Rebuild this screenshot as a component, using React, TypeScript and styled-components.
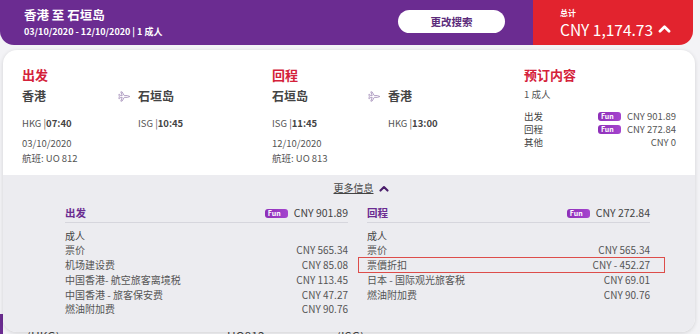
import React from "react";
import styled, { createGlobalStyle } from "styled-components";

const GlobalStyle = createGlobalStyle`
  html, body {
    margin: 0;
    padding: 0;
    width: 700px;
    height: 334px;
    overflow: hidden;
    background: #f3f3f6;
    font-family: "Noto Sans CJK SC", "Noto Sans", sans-serif;
  }
  * { box-sizing: border-box; }
`;

const Page = styled.div`
  width: 700px;
`;

const Header = styled.header`
  display: flex;
  width: 693px;
  height: 45px;
`;

const HeaderMain = styled.div`
  flex: 1;
  background: #6b2c91;
  border-bottom-left-radius: 14px;
  display: flex;
  align-items: center;
  justify-content: space-between;
  padding: 0 28px 0 24px;
`;

const TripTitle = styled.div`
  color: #fff;
  font-size: 12.5px;
  font-weight: 600;
  line-height: 17px;
  margin-top: -2px;
`;

const TripSub = styled.div`
  color: #fff;
  font-size: 9px;
  font-weight: 600;
  line-height: 13px;
  margin-top: 2px;
`;

const ChangeButton = styled.button`
  width: 107px;
  height: 23px;
  border: none;
  border-radius: 12px;
  background: #fff;
  color: #5b2b7a;
  font-family: inherit;
  font-size: 10.5px;
  font-weight: 600;
  margin-top: -3px;
`;

const TotalBox = styled.div`
  width: 160px;
  background: #e2232e;
  border-bottom-right-radius: 14px;
  padding-left: 27px;
  display: flex;
  flex-direction: column;
  justify-content: center;
  color: #fff;
`;

const TotalLabel = styled.div`
  font-size: 8px;
  font-weight: 600;
  line-height: 10px;
  margin-bottom: 2px;
`;

const TotalValue = styled.div`
  display: flex;
  align-items: center;
  gap: 5px;
  font-size: 15.5px;
  line-height: 18px;
`;

const Card = styled.section`
  position: relative;
  z-index: 1;
  width: 692px;
  margin: 5px 0 0 3px;
  border-radius: 14px;
  overflow: hidden;
  background: #fff;
  box-shadow: 0 1px 4px rgba(0, 0, 0, 0.14);
`;

const Top = styled.div`
  height: 125px;
  padding: 16px 19px 0;
  display: grid;
  grid-template-columns: 250px 252px 1fr;
`;

const SectionTitle = styled.div`
  color: #d4213a;
  font-size: 13px;
  font-weight: 700;
  line-height: 18px;
`;

const LegGrid = styled.div<{ $mt: number }>`
  display: grid;
  grid-template-columns: 96px 20px 1fr;
  align-items: center;
  margin-top: ${(p) => p.$mt}px;
`;

const City = styled.div`
  color: #444;
  font-size: 12px;
  font-weight: 700;
  line-height: 18px;
`;

const Time = styled.div`
  color: #555;
  font-size: 9.5px;
  line-height: 14px;
  b { font-weight: 700; color: #444; }
`;

const Meta = styled.div<{ $mt?: number }>`
  color: #555;
  font-size: 9.5px;
  line-height: 15px;
  margin-top: ${(p) => p.$mt ?? 0}px;
`;

const PlaneIcon = () => (
  <svg width="13" height="13" viewBox="0 0 24 24" fill="none" stroke="#b09dc2" strokeWidth="1.8" strokeLinejoin="round">
    <path d="M22 12 L17 10.3 L11.5 10.3 L7.5 3.5 L5.2 3.5 L7.8 10.3 L4.6 10.3 L3 8 L1.6 8 L2.5 12 L1.6 16 L3 16 L4.6 13.7 L7.8 13.7 L5.2 20.5 L7.5 20.5 L11.5 13.7 L17 13.7 Z" />
  </svg>
);

const Chevron = ({ color, size }: { color: string; size: number }) => (
  <svg width={size} height={size * 0.7} viewBox="0 0 14 10" fill="none" stroke={color} strokeWidth="3" strokeLinecap="round" strokeLinejoin="round">
    <polyline points="2,8 7,3 12,8" />
  </svg>
);

const SummaryLine = styled.div<{ $mt?: number }>`
  display: flex;
  align-items: center;
  color: #555;
  font-size: 9.5px;
  line-height: 13px;
  margin-top: ${(p) => p.$mt ?? 0}px;
`;

const SummaryLabel = styled.span`
  flex: 1;
  color: #444;
`;

const FunBadge = styled.span`
  display: inline-flex;
  align-items: center;
  width: 23px;
  height: 9px;
  border-radius: 3px;
  background: linear-gradient(90deg, #8e2fb8 0%, #a545cf 100%);
  color: #fff;
  font-size: 7px;
  font-weight: 700;
  line-height: 9px;
  padding-left: 3px;
  margin-right: 6px;
`;

const Gray = styled.div`
  background: #ececf0;
  padding: 6px 0 15px;
`;

const MoreRow = styled.div`
  display: flex;
  justify-content: center;
  align-items: center;
  gap: 5px;
  font-size: 10px;
  line-height: 14px;
  color: #444;
  padding-left: 24px;
  span { text-decoration: underline; }
`;

const Details = styled.div`
  display: grid;
  grid-template-columns: 283px 283px;
  column-gap: 19px;
  margin: 10px 0 0 62px;
`;

const DetailHead = styled.div`
  display: flex;
  align-items: center;
  line-height: 16px;
  padding-bottom: 1px;
  border-bottom: 1px solid #d6d6dd;
  font-size: 10.5px;
  margin-bottom: 5.6px;
`;

const HeadTitle = styled.span`
  flex: 1;
  color: #6b2c91;
  font-weight: 600;
`;

const HeadPrice = styled.span`
  color: #444;
`;

const Row = styled.div<{ $highlight?: boolean }>`
  position: relative;
  display: flex;
  justify-content: space-between;
  font-size: 10px;
  line-height: 14.75px;
  color: #555;
  &::before {
    content: "";
    display: ${(p) => (p.$highlight ? "block" : "none")};
    position: absolute;
    top: -1px;
    bottom: 0;
    left: -9px;
    right: -15px;
    border: 1px solid #dd4d4a;
  }
`;

const RowLabel = styled.span<{ $strong?: boolean }>`
  color: ${(p) => (p.$strong ? "#444" : "#555")};
`;

const NextSection = styled.div`
  position: relative;
  z-index: 0;
  margin-top: -18px;
  border-left: 3px solid #6b2c91;
  padding: 14px 0 0 24px;
  display: grid;
  grid-template-columns: 200px 110px auto;
  font-size: 12px;
  line-height: 16px;
  color: #444;
  height: 40px;
`;

type Line = { label: string; value?: string; highlight?: boolean; strong?: boolean };

const outbound: Line[] = [
  { label: "成人", strong: true },
  { label: "票价", value: "CNY 565.34" },
  { label: "机场建设费", value: "CNY 85.08" },
  { label: "中国香港- 航空旅客离境税", value: "CNY 113.45" },
  { label: "中国香港 - 旅客保安费", value: "CNY 47.27" },
  { label: "燃油附加费", value: "CNY 90.76" },
];

const inbound: Line[] = [
  { label: "成人", strong: true },
  { label: "票价", value: "CNY 565.34" },
  { label: "票價折扣", value: "CNY - 452.27", highlight: true },
  { label: "日本 - 国际观光旅客税", value: "CNY 69.01" },
  { label: "燃油附加费", value: "CNY 90.76" },
];

const Leg = (p: { title: string; from: string; to: string; fromCode: string; fromTime: string; toCode: string; toTime: string; date: string; flight: string }) => (
  <div>
    <SectionTitle>{p.title}</SectionTitle>
    <LegGrid $mt={3}>
      <City>{p.from}</City>
      <PlaneIcon />
      <City>{p.to}</City>
    </LegGrid>
    <LegGrid $mt={11}>
      <Time>
        {p.fromCode} |<b>{p.fromTime}</b>
      </Time>
      <span />
      <Time>
        {p.toCode} |<b>{p.toTime}</b>
      </Time>
    </LegGrid>
    <Meta $mt={5.5}>{p.date}</Meta>
    <Meta>航班: {p.flight}</Meta>
  </div>
);

const DetailColumn = ({ title, price, lines }: { title: string; price: string; lines: Line[] }) => (
  <div>
    <DetailHead>
      <HeadTitle>{title}</HeadTitle>
      <FunBadge>Fun</FunBadge>
      <HeadPrice>{price}</HeadPrice>
    </DetailHead>
    {lines.map((l, i) => (
      <Row key={i} $highlight={l.highlight}>
        <RowLabel $strong={l.strong}>{l.label}</RowLabel>
        {l.value && <span>{l.value}</span>}
      </Row>
    ))}
  </div>
);

export default function App() {
  return (
    <Page>
      <GlobalStyle />
      <Header>
        <HeaderMain>
          <div>
            <TripTitle>香港 至 石垣岛</TripTitle>
            <TripSub>03/10/2020 - 12/10/2020 | 1 成人</TripSub>
          </div>
          <ChangeButton>更改搜索</ChangeButton>
        </HeaderMain>
        <TotalBox>
          <TotalLabel>总计</TotalLabel>
          <TotalValue>
            CNY 1,174.73 <Chevron color="#fff" size={13} />
          </TotalValue>
        </TotalBox>
      </Header>

      <Card>
        <Top>
          <Leg title="出发" from="香港" to="石垣岛" fromCode="HKG" fromTime="07:40" toCode="ISG" toTime="10:45" date="03/10/2020" flight="UO 812" />
          <Leg title="回程" from="石垣岛" to="香港" fromCode="ISG" fromTime="11:45" toCode="HKG" toTime="13:00" date="12/10/2020" flight="UO 813" />
          <div>
            <SectionTitle>预订内容</SectionTitle>
            <Meta $mt={3}>1 成人</Meta>
            <SummaryLine $mt={8}>
              <SummaryLabel>出发</SummaryLabel>
              <FunBadge>Fun</FunBadge>
              <span>CNY 901.89</span>
            </SummaryLine>
            <SummaryLine>
              <SummaryLabel>回程</SummaryLabel>
              <FunBadge>Fun</FunBadge>
              <span>CNY 272.84</span>
            </SummaryLine>
            <SummaryLine>
              <SummaryLabel>其他</SummaryLabel>
              <span>CNY 0</span>
            </SummaryLine>
          </div>
        </Top>
        <Gray>
          <MoreRow>
            <span>更多信息</span>
            <Chevron color="#4b1d6b" size={10} />
          </MoreRow>
          <Details>
            <DetailColumn title="出发" price="CNY 901.89" lines={outbound} />
            <DetailColumn title="回程" price="CNY 272.84" lines={inbound} />
          </Details>
        </Gray>
      </Card>

      <NextSection>
        <span>(HKG)</span>
        <span>UO812</span>
        <span>(ISG)</span>
      </NextSection>
    </Page>
  );
}
